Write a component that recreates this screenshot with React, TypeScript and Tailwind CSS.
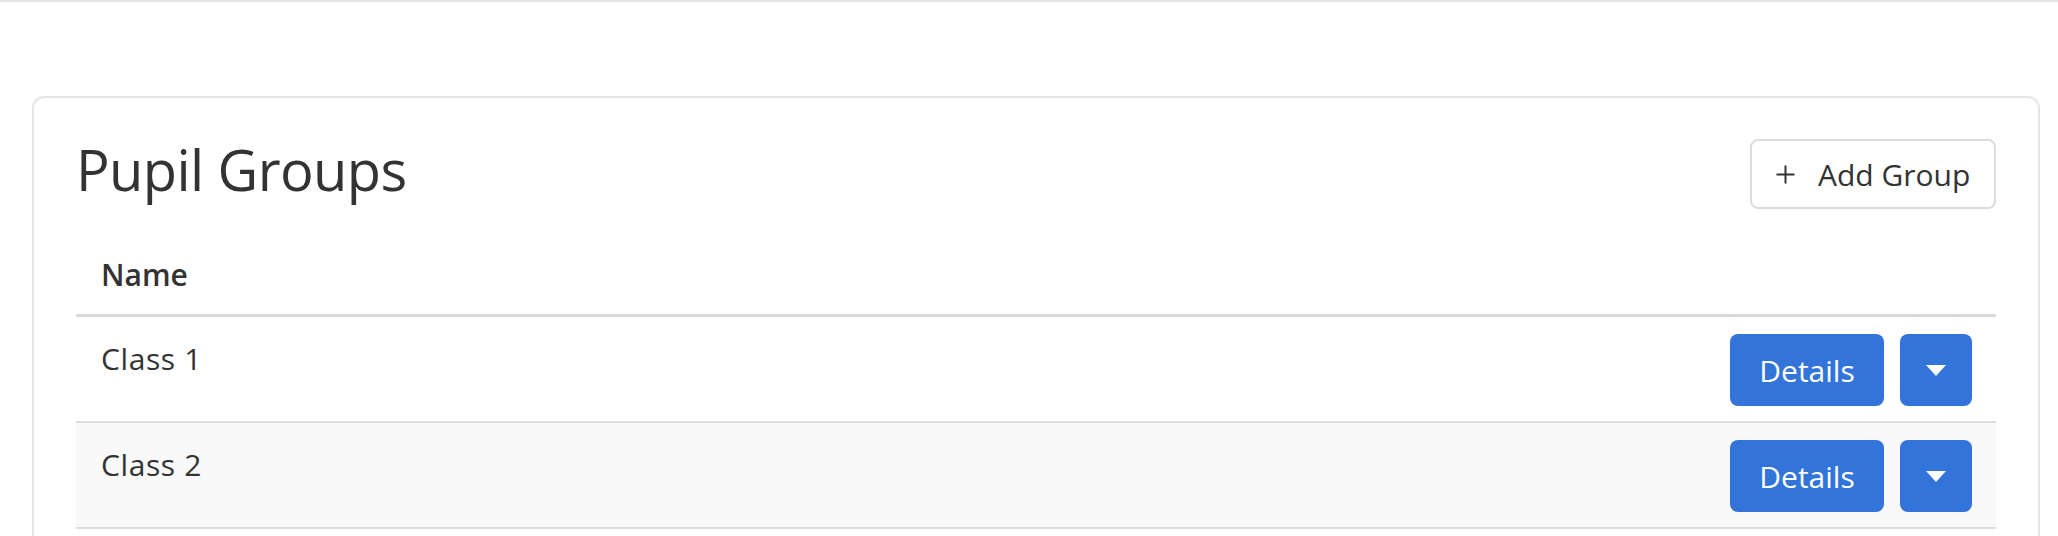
import React from 'react';

interface Group {
    id: number;
    name: string;
}

const groups: Group[] = [
    { id: 1, name: 'Class 1' },
    { id: 2, name: 'Class 2' },
];

const PlusIcon: React.FC = () => (
    <svg width="19" height="19" viewBox="0 0 19 19" className="shrink-0">
        <path d="M9.5 0.5v18M0.5 9.5h18" stroke="#333333" strokeWidth="2" fill="none" />
    </svg>
);

const CaretIcon: React.FC = () => (
    <svg width="20" height="11" viewBox="0 0 20 11">
        <polygon points="0,0 20,0 10,11" fill="#ffffff" />
    </svg>
);

const GroupRow: React.FC<{ group: Group; striped: boolean }> = ({ group, striped }) => {
    return (
        <div className={`flex items-start justify-between border-b-2 border-[#dedede] pt-[17px] pb-[15px] pl-[25px] pr-[24px] ${striped ? 'bg-[#f9f9f9]' : 'bg-white'}`}>
            <span className="mt-[2px] text-[30px] leading-[45px] tracking-[0.6px] text-[#333333]">{group.name}</span>
            <div className="flex gap-4">
                <button className="flex h-[72px] w-[154px] items-center justify-center rounded-[8px] bg-[#3274d9] text-[30px] leading-[45px] text-white">
                    Details
                </button>
                <button className="flex h-[72px] w-[72px] items-center justify-center rounded-[8px] bg-[#3274d9]">
                    <CaretIcon />
                </button>
            </div>
        </div>
    );
};

const App: React.FC = () => {
    return (
        <div className="min-h-screen bg-white font-['Open_Sans',sans-serif] text-[#333333]">
            <div className="h-[2px] bg-[#e5e5e5]"></div>
            <div className="ml-[32px] mr-[18px] mt-[94px] rounded-[12px] border-2 border-[#e5e5e5] bg-white px-[42px] pt-[37px] pb-10">
                <div className="flex items-start justify-between">
                    <h1 className="text-[56px] leading-[68px] font-normal tracking-[-0.6px] text-[#333333]">Pupil Groups</h1>
                    <button className="mt-[4px] flex h-[70px] w-[246px] items-center gap-[23px] rounded-[8px] border-2 border-[#dcdcdc] pl-[24px] text-[30px] leading-[45px] text-[#333333]">
                        <PlusIcon />
                        Add Group
                    </button>
                </div>

                <div className="mt-[19px]">
                    <div className="border-b-[3px] border-[#d9d9d9] pt-[24px] pb-[17px] pl-[25px]">
                        <span className="text-[30px] leading-[45px] font-semibold text-[#333333]">Name</span>
                    </div>
                    {groups.map((group, i) => (
                        <GroupRow key={group.id} group={group} striped={i % 2 === 1} />
                    ))}
                </div>
            </div>
        </div>
    );
};

export default App;
